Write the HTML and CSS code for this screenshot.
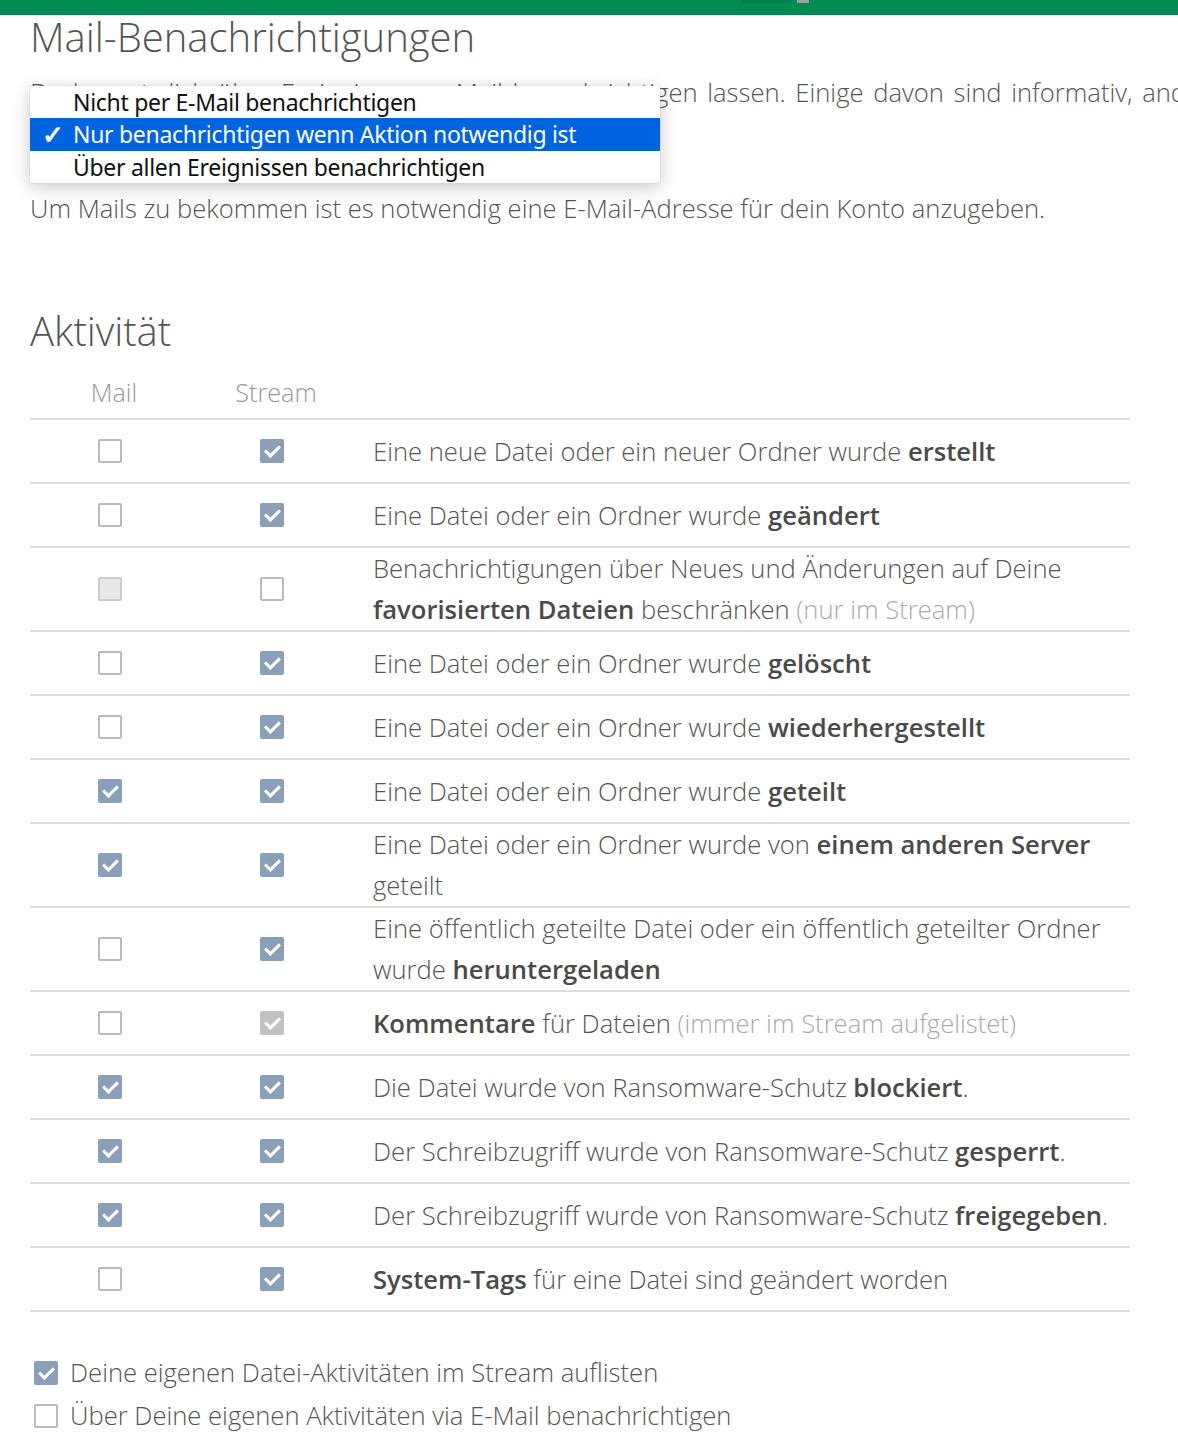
FILE: index.html
```html
<!DOCTYPE html>
<html lang="de">
<head>
  <meta charset="UTF-8">
  <title>Mail-Benachrichtigungen</title>
  <link rel="stylesheet" href="styles.css">
</head>
<body>
  <div id="topbar"><span class="tb-tab"></span><span class="tb-dot"></span></div>
  <div id="content">
    <h2>Mail-Benachrichtigungen</h2>
    <p class="intro">Du kannst dich über Ereignisse per Mail benachrichtigen lassen. Einige davon sind informativ, andere erfordern eine Aktion.</p>
    <div class="selectSpace"></div>
    <p class="hint">Um Mails zu bekommen ist es notwendig eine E-Mail-Adresse für dein Konto anzugeben.</p>

    <!-- native select popup, opened -->
    <ul class="popup">
      <li>Nicht per E-Mail benachrichtigen</li>
      <li class="sel"><span class="tick">✓</span>Nur benachrichtigen wenn Aktion notwendig ist</li>
      <li>Über allen Ereignissen benachrichtigen</li>
    </ul>

    <h2 class="section">Aktivität</h2>
    <div class="grid">
      <div class="row head"><div class="c">Mail</div><div class="c">Stream</div><div></div></div>

      <div class="row"><div class="c"><span class="cb"></span></div><div class="c"><span class="cb on"></span></div>
        <div class="txt">Eine neue Datei oder ein neuer Ordner wurde <b>erstellt</b></div></div>
      <div class="row"><div class="c"><span class="cb"></span></div><div class="c"><span class="cb on"></span></div>
        <div class="txt">Eine Datei oder ein Ordner wurde <b>geändert</b></div></div>
      <div class="row"><div class="c"><span class="cb off"></span></div><div class="c"><span class="cb"></span></div>
        <div class="txt">Benachrichtigungen über Neues und Änderungen auf Deine <b>favorisierten Dateien</b> beschränken <span class="muted">(nur im Stream)</span></div></div>
      <div class="row"><div class="c"><span class="cb"></span></div><div class="c"><span class="cb on"></span></div>
        <div class="txt">Eine Datei oder ein Ordner wurde <b>gelöscht</b></div></div>
      <div class="row"><div class="c"><span class="cb"></span></div><div class="c"><span class="cb on"></span></div>
        <div class="txt">Eine Datei oder ein Ordner wurde <b>wiederhergestellt</b></div></div>
      <div class="row"><div class="c"><span class="cb on"></span></div><div class="c"><span class="cb on"></span></div>
        <div class="txt">Eine Datei oder ein Ordner wurde <b>geteilt</b></div></div>
      <div class="row"><div class="c"><span class="cb on"></span></div><div class="c"><span class="cb on"></span></div>
        <div class="txt">Eine Datei oder ein Ordner wurde von <b>einem anderen Server</b> geteilt</div></div>
      <div class="row"><div class="c"><span class="cb"></span></div><div class="c"><span class="cb on"></span></div>
        <div class="txt">Eine öffentlich geteilte Datei oder ein öffentlich geteilter Ordner wurde <b>heruntergeladen</b></div></div>
      <div class="row"><div class="c"><span class="cb"></span></div><div class="c"><span class="cb on off"></span></div>
        <div class="txt"><b>Kommentare</b> für Dateien <span class="muted">(immer im Stream aufgelistet)</span></div></div>
      <div class="row"><div class="c"><span class="cb on"></span></div><div class="c"><span class="cb on"></span></div>
        <div class="txt">Die Datei wurde von Ransomware-Schutz <b>blockiert</b>.</div></div>
      <div class="row"><div class="c"><span class="cb on"></span></div><div class="c"><span class="cb on"></span></div>
        <div class="txt">Der Schreibzugriff wurde von Ransomware-Schutz <b>gesperrt</b>.</div></div>
      <div class="row"><div class="c"><span class="cb on"></span></div><div class="c"><span class="cb on"></span></div>
        <div class="txt">Der Schreibzugriff wurde von Ransomware-Schutz <b>freigegeben</b>.</div></div>
      <div class="row"><div class="c"><span class="cb"></span></div><div class="c"><span class="cb on"></span></div>
        <div class="txt"><b>System-Tags</b> für eine Datei sind geändert worden</div></div>
    </div>

    <div class="opts">
      <label><span class="cb on"></span>Deine eigenen Datei-Aktivitäten im Stream auflisten</label>
      <label><span class="cb"></span>Über Deine eigenen Aktivitäten via E-Mail benachrichtigen</label>
    </div>
  </div>
</body>
</html>
```

FILE: styles.css
```css
body { margin: 0; font-family: "Open Sans", "Noto Sans", sans-serif; font-weight: 300; color: #555; background: #fff; overflow: hidden; }

#topbar { height: 15px; background: #008c50; position: relative; }
.tb-tab { position: absolute; left: 742px; top: 0; width: 50px; height: 3px; background: #00804a; }
.tb-dot { position: absolute; left: 797px; top: 0; width: 12px; height: 3px; background: #93a89c; }

#content { position: relative; padding-left: 30px; }

h2 { margin: 0; font-weight: 300; font-size: 40px; line-height: 44px; color: #555; }
h2.section { margin-top: 80px; }

.intro { margin: 14px 0 0; font-size: 25.6px; line-height: 40px; white-space: nowrap; word-spacing: 3px; }
.selectSpace { height: 76px; }
.hint { margin: 0; font-size: 25.6px; line-height: 40px; }

.popup { position: absolute; left: 30px; top: 71px; width: 630px; margin: 0; padding: 0; list-style: none; background: #fff; box-shadow: 0 4px 18px rgba(0, 0, 0, 0.22), 0 0 1px rgba(0, 0, 0, 0.3); border-radius: 2px; font-family: "Noto Sans", sans-serif; font-weight: 400; font-size: 23px; color: #111; }
.popup li { height: 32px; line-height: 32px; padding-left: 43px; position: relative; letter-spacing: -0.3px; }
.popup li.sel { background: #0064e1; color: #fff; height: 33px; line-height: 33px; }
.popup .tick { position: absolute; left: 12px; font-size: 26px; font-weight: 700; }

.grid { margin-top: 13px; width: 1100px; }
.row { display: grid; grid-template-columns: 160px 164px 1fr; align-items: center; min-height: 62px; border-bottom: 2px solid #ddd; font-size: 25.6px; line-height: 41px; }
.row.head { min-height: 0; height: 52px; align-items: start; color: #999; font-size: 25.2px; line-height: 52px; }
.row.head .c { padding-left: 8px; }
.c { display: flex; justify-content: center; }
.txt { padding-left: 19px; padding-right: 20px; }
.txt b { font-weight: 600; color: #4a4a4a; }
.muted { color: #aaa; }

.cb { display: inline-block; width: 24px; height: 24px; box-sizing: border-box; border: 2px solid #bbb; border-radius: 2px; background: #fff; position: relative; flex: none; }
.cb.off { background: #e9e9e9; border-color: #ccc; }
.cb.on { background: #8a9fba; border-color: #8a9fba; }
.cb.on.off { background: #c2c2c2; border-color: #c2c2c2; }
.cb.on::after { content: ""; position: absolute; left: 6px; top: 1px; width: 6px; height: 12px; border: solid #fff; border-width: 0 3px 3px 0; transform: rotate(45deg); }

.opts { margin-top: 39px; display: flex; flex-direction: column; }
.opts label { display: flex; align-items: center; gap: 12px; font-size: 25.6px; line-height: 43px; padding-left: 4px; }
```
